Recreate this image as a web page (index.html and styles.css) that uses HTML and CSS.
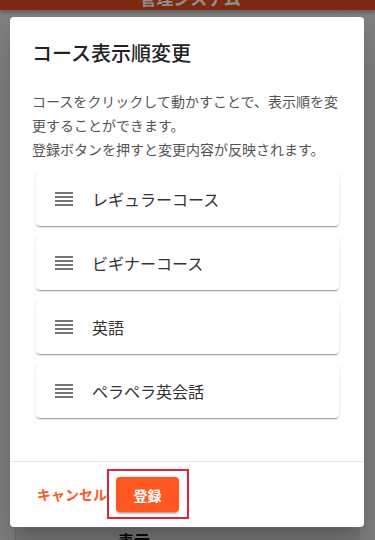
FILE: index.html
```html
<!DOCTYPE html>
<html lang="ja">
<head>
    <meta charset="UTF-8">
    <meta name="viewport" content="width=device-width, initial-scale=1.0">
    <title>コース表示順変更</title>
    <link rel="stylesheet" href="styles.css">
</head>
<body>
    <header class="app-bar">
        <span class="app-title">管理システム</span>
    </header>

    <div class="dialog">
        <h2 class="dialog-title">コース表示順変更</h2>
        <div class="dialog-content">
            <p class="dialog-text">コースをクリックして動かすことで、表示順を変更することができます。<br>登録ボタンを押すと変更内容が反映されます。</p>
            <ul class="course-list">
                <li class="course-item">
                    <svg class="drag-icon" viewBox="0 0 24 24"><path d="M3 15h18v-2H3v2zm0 4h18v-2H3v2zm0-8h18V9H3v2zm0-6v2h18V5H3z"/></svg>
                    <span>レギュラーコース</span>
                </li>
                <li class="course-item">
                    <svg class="drag-icon" viewBox="0 0 24 24"><path d="M3 15h18v-2H3v2zm0 4h18v-2H3v2zm0-8h18V9H3v2zm0-6v2h18V5H3z"/></svg>
                    <span>ビギナーコース</span>
                </li>
                <li class="course-item">
                    <svg class="drag-icon" viewBox="0 0 24 24"><path d="M3 15h18v-2H3v2zm0 4h18v-2H3v2zm0-8h18V9H3v2zm0-6v2h18V5H3z"/></svg>
                    <span>英語</span>
                </li>
                <li class="course-item">
                    <svg class="drag-icon" viewBox="0 0 24 24"><path d="M3 15h18v-2H3v2zm0 4h18v-2H3v2zm0-8h18V9H3v2zm0-6v2h18V5H3z"/></svg>
                    <span>ペラペラ英会話</span>
                </li>
            </ul>
        </div>
        <div class="dialog-actions">
            <button class="btn-text">キャンセル</button>
            <span class="highlight">
                <button class="btn-primary">登録</button>
            </span>
        </div>
    </div>

    <div class="behind-card">
        <span class="behind-label">表示</span>
    </div>
</body>
</html>
```

FILE: styles.css
```css
* {
    margin: 0;
    padding: 0;
    box-sizing: border-box;
}

body {
    height: 540px;
    overflow: hidden;
    background: #7f7f7f;
    font-family: "Noto Sans CJK JP", "Noto Sans", sans-serif;
}

/* app bar, dimmed by the modal scrim */
.app-bar {
    height: 10px;
    overflow: hidden;
    background: #7f2b11;
    box-shadow: 0 2px 4px rgba(0, 0, 0, 0.3);
    text-align: center;
    position: relative;
    z-index: 1;
}

.app-title {
    display: block;
    margin-top: -11px;
    padding-left: 5px;
    font-size: 17px;
    line-height: 18px;
    font-weight: 700;
    color: #8f8f8f;
}

.dialog {
    margin: 7px 11px 0 10px;
    height: 510px;
    background: #fff;
    border-radius: 4px;
    box-shadow: 0 11px 15px -7px rgba(0, 0, 0, 0.2), 0 24px 38px 3px rgba(0, 0, 0, 0.14);
    display: flex;
    flex-direction: column;
    position: relative;
    z-index: 2;
}

.dialog-title {
    padding: 20px 22px 0;
    font-size: 20px;
    line-height: 32px;
    font-weight: 500;
    color: #222;
}

.dialog-content {
    flex: 1;
    padding: 20px 22px 0;
}

.dialog-text {
    font-size: 14px;
    line-height: 24px;
    color: #555;
}

.course-list {
    list-style: none;
    margin-top: 11px;
    padding: 0 3px 0 4px;
    display: flex;
    flex-direction: column;
    gap: 10px;
}

.course-item {
    height: 54px;
    display: flex;
    align-items: center;
    gap: 16px;
    padding: 0 16px;
    background: #fff;
    border-radius: 4px;
    box-shadow: 0 2px 1px -1px rgba(0, 0, 0, 0.2), 0 1px 1px 0 rgba(0, 0, 0, 0.14), 0 1px 3px 0 rgba(0, 0, 0, 0.12);
    font-size: 16px;
    color: #333;
}

.drag-icon {
    width: 24px;
    height: 24px;
    fill: #757575;
    flex-shrink: 0;
}

.dialog-actions {
    border-top: 1px solid #e6e6e6;
    padding: 7px 0 8px 27px;
    display: flex;
    align-items: center;
}

.btn-text {
    border: none;
    background: none;
    font-family: inherit;
    font-size: 14px;
    font-weight: 700;
    color: #ff5722;
    cursor: pointer;
}

/* red annotation box round the submit button */
.highlight {
    display: flex;
    border: 2px solid #e0243a;
    padding: 6px 8px 5px 7px;
}

.btn-primary {
    width: 63px;
    height: 35px;
    border: none;
    border-radius: 4px;
    background: #ff5722;
    color: #fff;
    font-family: inherit;
    font-size: 14px;
    font-weight: 700;
    cursor: pointer;
    box-shadow: 0 3px 1px -2px rgba(0, 0, 0, 0.2), 0 2px 2px 0 rgba(0, 0, 0, 0.14), 0 1px 5px 0 rgba(0, 0, 0, 0.12);
}

.behind-card {
    margin: 1px 15px 0 15px;
    height: 12px;
    overflow: hidden;
    background: #797979;
    border-left: 1px solid #6c6c6c;
    padding: 2px 0 0 102px;
}

.behind-label {
    display: block;
    font-size: 16px;
    font-weight: 700;
    line-height: 20px;
    color: #0a0a0a;
}
```
